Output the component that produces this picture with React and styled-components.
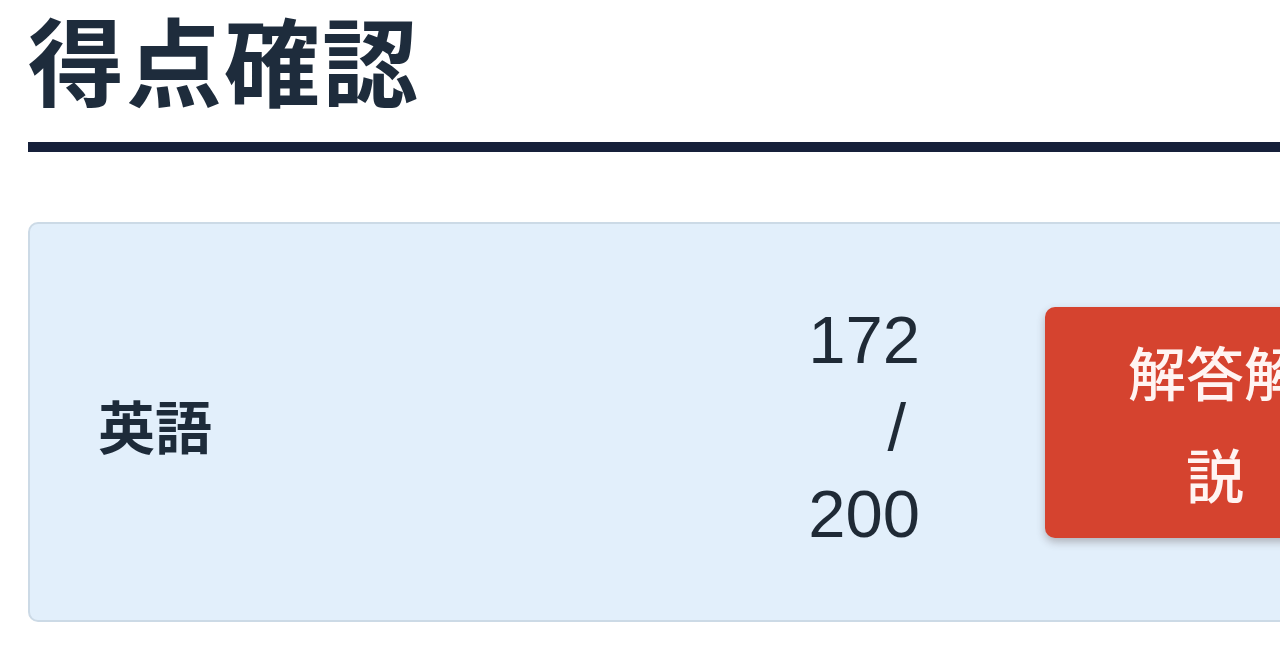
import React from 'react'
import styled, { createGlobalStyle } from 'styled-components'

const GlobalStyle = createGlobalStyle`
    html, body {
        margin: 0;
        padding: 0;
        background: #ffffff;
        overflow: hidden;
    }
    body {
        font-family: "Noto Sans CJK JP", "Noto Sans", sans-serif;
        color: #1d2b3a;
    }
`

const Page = styled.div`
    width: 1425px;
    padding: 0 0 0 28px;
`

const Title = styled.h1`
    margin: 0;
    font-size: 96px;
    line-height: 115px;
    font-weight: 700;
    color: #1e2c3c;
    letter-spacing: 2px;
`

const Rule = styled.hr`
    margin: 27px 0 0;
    height: 10px;
    border: none;
    background: #16203a;
`

const Card = styled.div`
    margin-top: 70px;
    display: flex;
    align-items: center;
    height: 396px;
    padding: 0 66px 0 68px;
    background: #e2effb;
    border: 2px solid #ccdae6;
    border-radius: 10px;
`

const Subject = styled.div`
    flex: 1;
    font-size: 57px;
    font-weight: 700;
    color: #1d2b3a;
    padding-top: 4px;
`

const Score = styled.div`
    text-align: right;
    padding-top: 8px;
    font-family: "Liberation Sans", "Noto Sans CJK JP", sans-serif;
    font-size: 67px;
    line-height: 87px;
    color: #1f2a36;
`

const Slash = styled.span`
    padding-right: 14px;
`

const Button = styled.button`
    margin-left: 125px;
    width: 340px;
    height: 231px;
    padding: 0 60px;
    border: none;
    border-radius: 10px;
    background: #d5432f;
    color: #fff4f2;
    font-family: inherit;
    font-size: 58px;
    font-weight: 500;
    line-height: 102px;
    text-align: center;
    box-shadow: 0 4px 8px rgba(60, 40, 40, 0.3);
    cursor: pointer;
`

const App = () => {
    const result = { subject: "英語", score: 172, max: 200 }

    return (
        <>
            <GlobalStyle />
            <Page>
                <Title>得点確認</Title>
                <Rule />
                <Card>
                    <Subject>{result.subject}</Subject>
                    <Score>
                        {result.score}
                        <br />
                        <Slash>/</Slash>
                        <br />
                        {result.max}
                    </Score>
                    <Button>解答解説</Button>
                </Card>
            </Page>
        </>
    )
}

export default App
